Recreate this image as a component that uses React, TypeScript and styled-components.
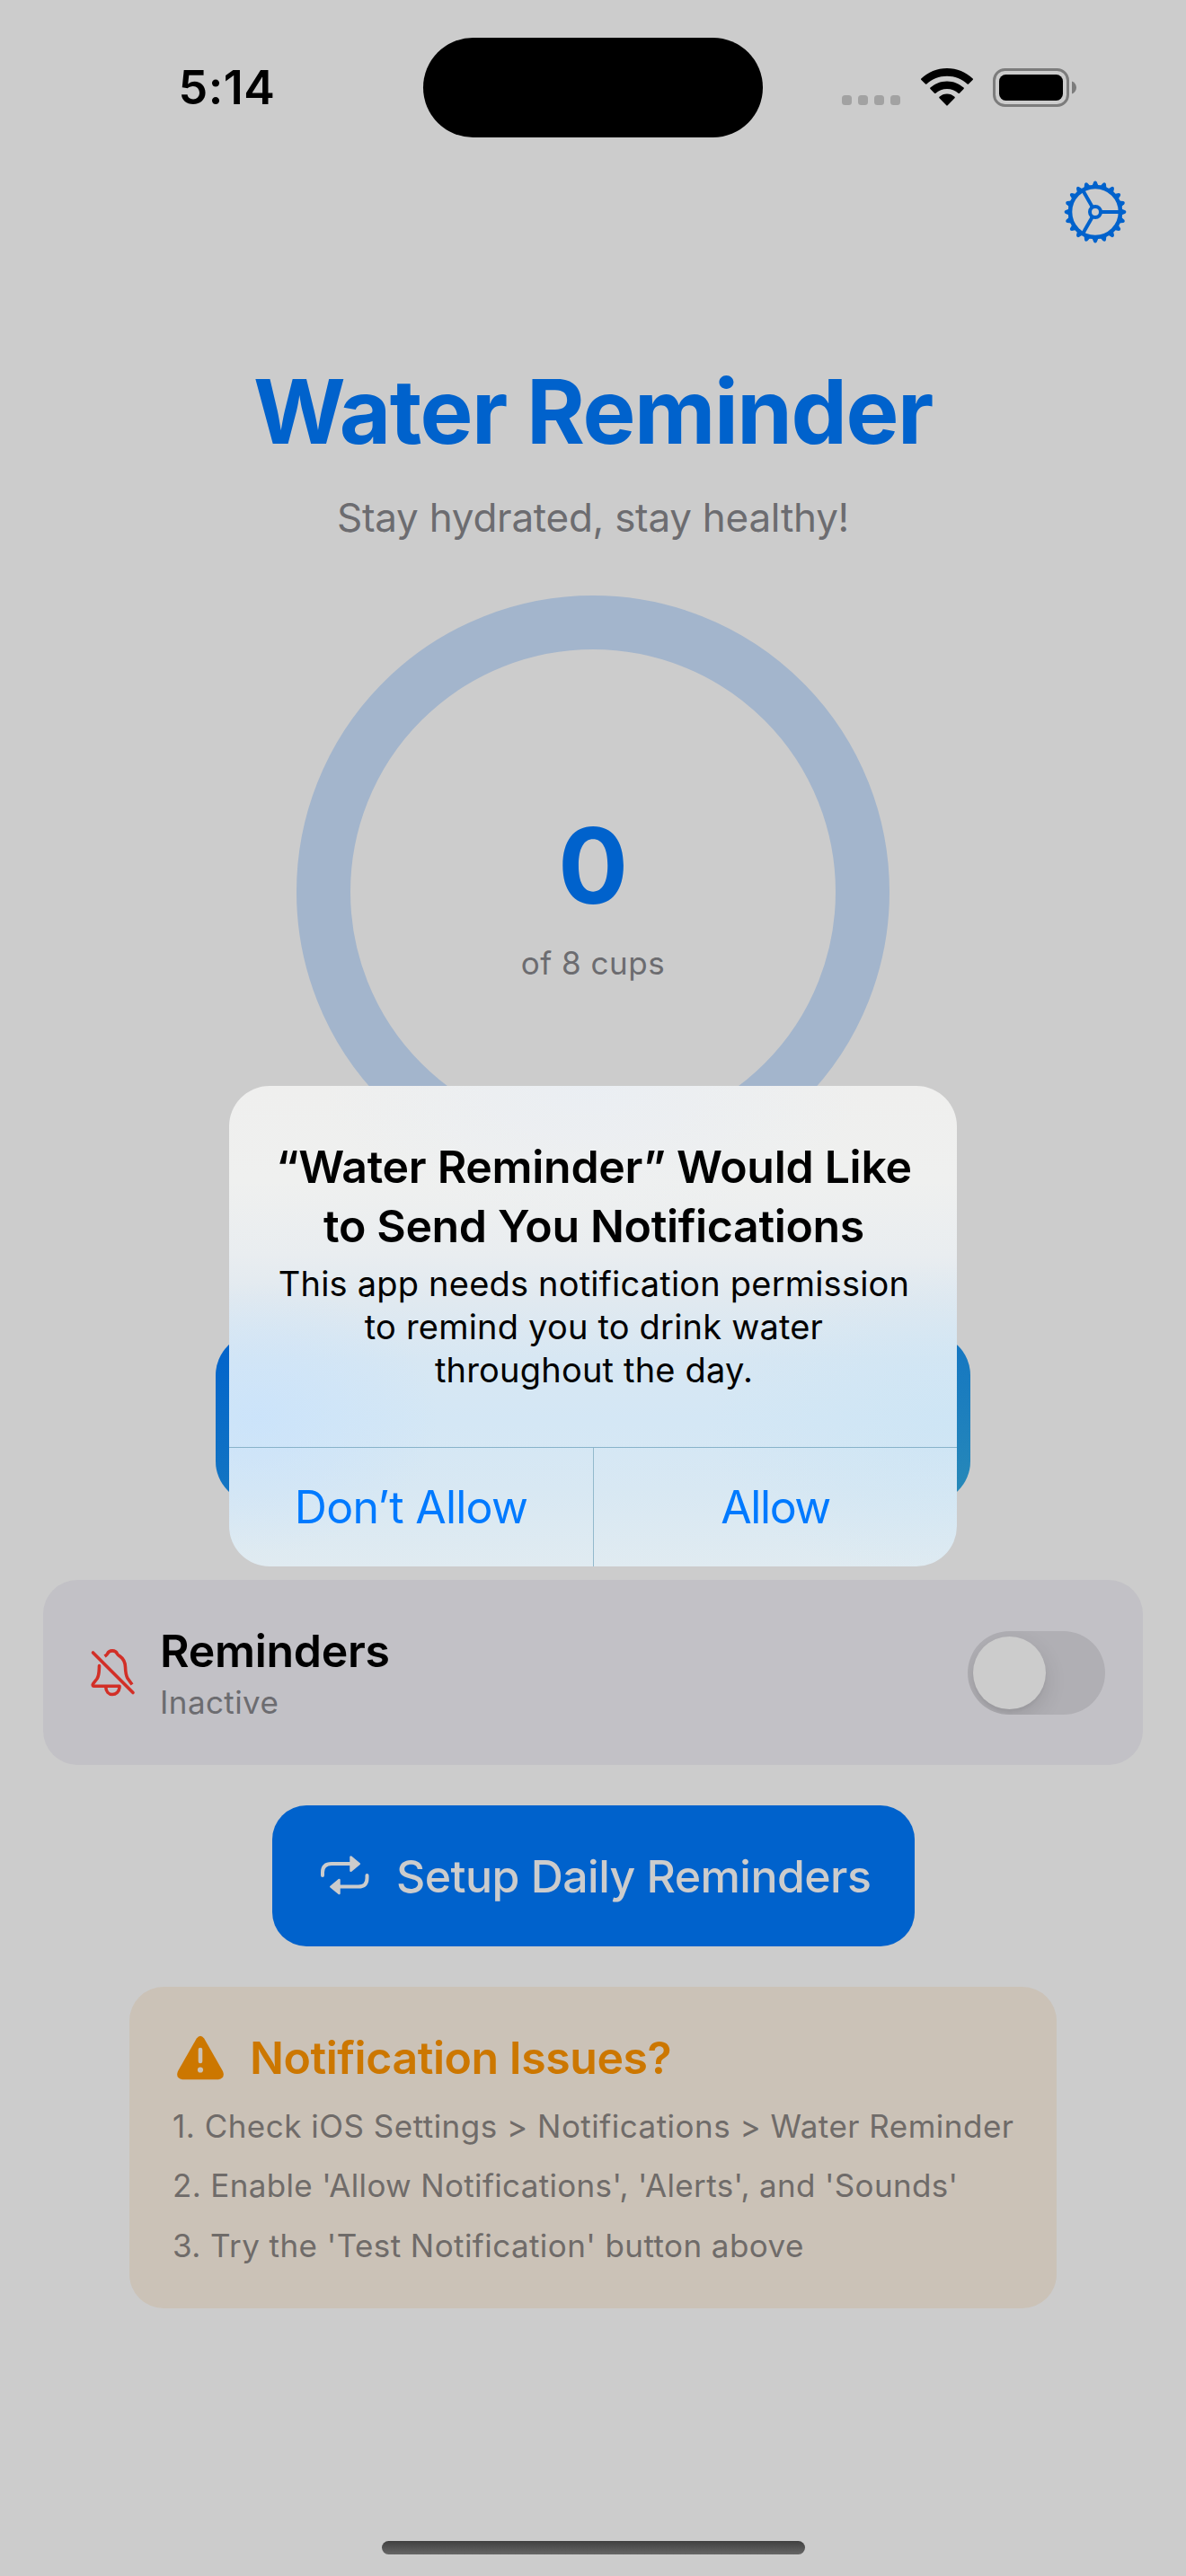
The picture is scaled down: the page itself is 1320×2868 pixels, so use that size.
import React from "react";
import styled, { createGlobalStyle } from "styled-components";

const GlobalStyle = createGlobalStyle`
  html, body { margin: 0; padding: 0; background: #cccccc; }
  *, *::before, *::after { box-sizing: border-box; }
  button { font: inherit; border: 0; background: none; padding: 0; margin: 0; }
  h1, h2, p { margin: 0; padding: 0; }
`;

const Screen = styled.div`
  position: relative;
  display: flex;
  flex-direction: column;
  width: 1320px;
  height: 2868px;
  overflow: hidden;
  background: #cccccc;
  color: #000;
  font-family: Inter, "Liberation Sans", sans-serif;
  white-space: nowrap;
`;

const Line = styled.p<{
  $size: number;
  $height: number;
  $weight?: number;
  $color?: string;
  $track?: number;
}>`
  font-size: ${(p) => p.$size}px;
  line-height: ${(p) => p.$height}px;
  font-weight: ${(p) => p.$weight ?? 400};
  color: ${(p) => p.$color ?? "#000"};
  letter-spacing: ${(p) => p.$track ?? 0}px;
`;

const StatusBar = styled.header`
  display: grid;
  grid-template-columns: 471px 378px 471px;
  height: 177px;
  padding-top: 41.5px;
`;

const StatusSide = styled.div<{ $left: number; $top?: number }>`
  display: flex;
  align-items: center;
  height: 111px;
  padding-left: ${(p) => p.$left}px;
  padding-top: ${(p) => p.$top ?? 0}px;
`;

const Island = styled.div`
  height: 111px;
  border-radius: 56px;
  background: #000;
`;

const Dots = styled.div`
  display: flex;
  gap: 7px;
  padding-top: 29px;
  margin-right: 23px;
`;

const Dot = styled.i`
  width: 11px;
  height: 11px;
  border-radius: 3.5px;
  background: #a2a2a2;
`;

const Wifi = styled.div`
  display: flex;
  margin-right: 22px;
`;

const Toolbar = styled.nav`
  display: flex;
  justify-content: flex-end;
  height: 220px;
  padding: 22.5px 65px 0 0;
`;

const Main = styled.main`
  display: flex;
  flex-direction: column;
  align-items: center;
  flex: 1;
`;

const Subtitle = styled.div`
  margin-top: 27px;
`;

const Ring = styled.section`
  display: flex;
  flex-direction: column;
  align-items: center;
  justify-content: center;
  gap: 12px;
  width: 660px;
  height: 660px;
  margin-top: 57px;
  padding-top: 2px;
  border: 60px solid #a3b5cc;
  border-radius: 50%;
`;

const LogButton = styled.div`
  width: 840px;
  height: 188px;
  margin-top: 162px;
  border-radius: 46px;
  background: linear-gradient(to bottom right, #0062cc, #288ab8);
`;

const Card = styled.section`
  display: flex;
  align-items: center;
  width: 1224px;
  height: 206px;
  margin-top: 86px;
  padding: 0 42px 0 51px;
  border-radius: 38px;
  background: #c2c1c6;
`;

const CardText = styled.div`
  flex: 1;
  padding-left: 27px;
`;

const Switch = styled.div`
  width: 153px;
  height: 93px;
  padding: 6px;
  border-radius: 47px;
  background: #b0afb4;
  overflow: hidden;
`;

const Thumb = styled.div`
  width: 81px;
  height: 81px;
  border-radius: 50%;
  background: #cccccc;
  box-shadow: 0 9px 24px rgba(0, 0, 0, 0.12), 0 3px 3px rgba(0, 0, 0, 0.04);
`;

const SetupButton = styled.button`
  display: flex;
  align-items: center;
  width: 715px;
  height: 157px;
  margin-top: 45px;
  padding-left: 52px;
  border-radius: 38px;
  background: #0062cc;
`;

const SetupLabel = styled.span`
  padding-left: 28.5px;
`;

const Issues = styled.section`
  width: 1032px;
  height: 358px;
  margin-top: 45px;
  padding: 46px 48px;
  border-radius: 38px;
  background: #cbc2b7;
`;

const IssuesHead = styled.div`
  display: flex;
  align-items: center;
  gap: 28px;
  height: 66px;
  padding-left: 4px;
`;

const Steps = styled.div`
  display: flex;
  flex-direction: column;
  gap: 18.67px;
  margin-top: 18.6px;
`;

const HomeIndicator = styled.div`
  width: 471px;
  height: 15px;
  margin: auto 0 24px;
  border-radius: 8px;
  background: linear-gradient(#404040, #666666);
`;

const Overlay = styled.div`
  position: absolute;
  inset: 0;
  display: flex;
  align-items: center;
  justify-content: center;
  padding-top: 85px;
`;

const Alert = styled.div`
  display: flex;
  flex-direction: column;
  width: 810px;
  height: 535px;
  border-radius: 45px;
  overflow: hidden;
  text-align: center;
  background:
    radial-gradient(ellipse 200px 150px at 4% 69%, rgba(200, 226, 252, 0.7), rgba(200, 226, 252, 0)),
    radial-gradient(ellipse 260px 180px at 98% 70%, rgba(202, 228, 245, 0.6), rgba(202, 228, 245, 0)),
    radial-gradient(ellipse 300px 150px at 50% 0%, rgba(233, 238, 244, 0.8), rgba(233, 238, 244, 0)),
    linear-gradient(#efefee 0%, #eff0ef 20%, #e9edf0 35%, #e0e9f0 45%, #d7e7f3 57%, #d4e7f5 70%, #d8e8f3 84%, #e0ebf1 100%);
`;

const AlertBody = styled.div`
  height: 402px;
  padding: 57px 0 0 2px;
`;

const AlertMessage = styled.div`
  margin-top: 7px;
`;

const AlertActions = styled.div`
  display: grid;
  grid-template-columns: 405px 1px 404px;
  height: 133px;
  border-top: 1px solid #88b3ca;
`;

const Divider = styled.i`
  background: #93b9cc;
`;

const GearIcon = () => (
  <svg width="72" height="72" viewBox="-36 -36 72 72" fill="none" stroke="#0062cc">
    <circle r="28" strokeWidth="4.6" />
    <circle r="6" strokeWidth="4" />
    {[0, 120, 240].map((a) => (
      <path key={a} d="M7 0H27" strokeWidth="4" transform={`rotate(${a})`} />
    ))}
    {Array.from({ length: 20 }, (_, i) => (
      <path
        key={i}
        d="M29 -3.6L33.4 -1.7Q35.4 0 33.4 1.7L29 3.6Z"
        fill="#0062cc"
        stroke="none"
        transform={`rotate(${i * 18})`}
      />
    ))}
  </svg>
);

const WifiIcon = () => (
  <svg width="58" height="43" viewBox="0 0 58 43">
    <path d="M29 0C40 0 50.2 4.3 57.7 11.5Q58.3 12.2 57.6 12.9L53 17.5Q52.3 18.2 51.6 17.5C45.5 12 37.7 8.8 29 8.8S12.5 12 6.4 17.5Q5.7 18.2 5 17.5L.4 12.9Q-.3 12.2 .3 11.5C7.8 4.3 18 0 29 0Z" />
    <path d="M29 14.4C36.2 14.4 42.8 17.2 47.6 21.6Q48.3 22.3 47.6 23L43 27.7Q42.3 28.3 41.5 27.7C38.2 24.7 33.8 23 29 23S19.8 24.7 16.5 27.7Q15.7 28.3 15 27.7L10.4 23Q9.7 22.3 10.4 21.6C15.2 17.2 21.8 14.4 29 14.4Z" />
    <path d="M29 28.5C32.2 28.5 35.2 29.7 37.5 31.8Q38.2 32.5 37.5 33.2L29.7 41.3Q29 42 28.3 41.3L20.5 33.2Q19.8 32.5 20.5 31.8C22.8 29.7 25.8 28.5 29 28.5Z" />
  </svg>
);

const BatteryIcon = () => (
  <svg width="94" height="43" viewBox="0 0 94 43">
    <rect x="1.5" y="1.5" width="82" height="40" rx="12" fill="none" stroke="#7c7c7c" strokeWidth="3" />
    <rect x="7" y="7" width="71" height="29" rx="7.5" />
    <path d="M88 14.5C91 15.6 93 18.3 93 21.5S91 27.4 88 28.5Z" fill="#7c7c7c" />
  </svg>
);

const BellSlashIcon = () => (
  <svg width="52" height="56" viewBox="0 0 52 56" fill="none" stroke="#d22f27" strokeWidth="3.6" strokeLinecap="round" strokeLinejoin="round">
    <path d="M4.5 6L49 50.5" />
    <path d="M17.5 10C19 8.9 20 8.6 20.5 7.4C21.5 5 23.5 3.9 26 3.9S30.500 5 31.5 7.4C32 8.6 33 8.9 34.5 10C38.5 12.8 40.3 17 40.5 22C40.7 28 41 31 43 34.5L48 41.5" strokeLinecap="butt" />
    <path d="M11.5 20.5C11.2 28 11.4 31.5 9 35L4.7 40.5C3.7 42 4.2 43.3 6 43.3H34" />
    <path d="M18.8 44.5C19 49.5 22 52.5 26 52.5S33.5 49.5 34 44.8" />
  </svg>
);

const RepeatIcon = () => (
  <svg width="58" height="50" viewBox="0 0 58 50" fill="none" stroke="#cccccc" strokeWidth="4" strokeLinecap="round">
    <path d="M4 24V20.5Q4 11 14 11H36" />
    <path d="M53.5 24V27Q53.5 36.6 44 36.6H22" />
    <path d="M35.5 3.5V18.8L44.8 11.1Z" fill="#cccccc" strokeWidth="2.5" strokeLinejoin="round" />
    <path d="M22.5 29V44L13.3 36.6Z" fill="#cccccc" strokeWidth="2.5" strokeLinejoin="round" />
  </svg>
);

const WarningIcon = () => (
  <svg width="54" height="50" viewBox="0 0 54 50">
    <path d="M22.8 3.4Q27 -2 31.2 3.4L52 40Q55 48 47 49.3H7Q-1 48 2 40Z" fill="#cc7700" />
    <path d="M27 16V29" stroke="#cbc2b7" strokeWidth="4.6" strokeLinecap="round" />
    <circle cx="27" cy="38.5" r="3.1" fill="#cbc2b7" />
  </svg>
);

const GREY = "#6c6c70";
const BLUE = "#0062cc";

const steps = [
  { text: "1. Check iOS Settings > Notifications > Water Reminder", track: 0.49 },
  { text: "2. Enable 'Allow Notifications', 'Alerts', and 'Sounds'", track: 0.34 },
  { text: "3. Try the 'Test Notification' button above", track: 0.43 },
];

const message = [
  "This app needs notification permission",
  "to remind you to drink water",
  "throughout the day.",
];

export default function App() {
  return (
    <Screen>
      <GlobalStyle />
      <StatusBar>
        <StatusSide $left={198.5} $top={2}>
          <Line $size={52} $height={64} $weight={600} $track={0.5}>5:14</Line>
        </StatusSide>
        <Island />
        <StatusSide $left={88}>
          <Dots>
            <Dot /><Dot /><Dot /><Dot />
          </Dots>
          <Wifi><WifiIcon /></Wifi>
          <BatteryIcon />
        </StatusSide>
      </StatusBar>
      <Toolbar>
        <GearIcon />
      </Toolbar>
      <Main>
        <Line as="h1" $size={99} $height={122} $weight={700} $color={BLUE} $track={-1.42}>Water Reminder</Line>
        <Subtitle>
          <Line $size={44} $height={60} $color={GREY} $track={-0.26}>Stay hydrated, stay healthy!</Line>
        </Subtitle>
        <Ring>
          <Line $size={116} $height={144} $weight={700} $color={BLUE}>0</Line>
          <Line $size={35} $height={48} $color={GREY} $track={0.5}>of 8 cups</Line>
        </Ring>
        <LogButton />
        <Card>
          <BellSlashIcon />
          <CardText>
            <Line as="h2" $size={50} $height={66} $weight={600} $track={-0.3}>Reminders</Line>
            <Line $size={35} $height={48} $color={GREY} $track={0.4}>Inactive</Line>
          </CardText>
          <Switch>
            <Thumb />
          </Switch>
        </Card>
        <SetupButton>
          <RepeatIcon />
          <SetupLabel>
            <Line as="span" $size={50} $height={66} $weight={500} $color="#cccccc" $track={-0.55}>Setup Daily Reminders</Line>
          </SetupLabel>
        </SetupButton>
        <Issues>
          <IssuesHead>
            <WarningIcon />
            <Line as="h2" $size={50} $height={66} $weight={600} $color="#cc7700" $track={-0.45}>Notification Issues?</Line>
          </IssuesHead>
          <Steps>
            {steps.map((s) => (
              <Line key={s.text} $size={35} $height={48} $color="#6f6b69" $track={s.track}>{s.text}</Line>
            ))}
          </Steps>
        </Issues>
        <HomeIndicator />
      </Main>
      <Overlay>
        <Alert role="alertdialog">
          <AlertBody>
            <Line $size={50} $height={66} $weight={600} $track={-0.3}>“Water Reminder” Would Like</Line>
            <Line $size={50} $height={66} $weight={600} $track={-0.35}>to Send You Notifications</Line>
            <AlertMessage>
              {message.map((m) => (
                <Line key={m} $size={38} $height={48} $track={0.2}>{m}</Line>
              ))}
            </AlertMessage>
          </AlertBody>
          <AlertActions>
            <button><Line as="span" $size={50} $height={66} $color="#007aff" $track={-0.75}>Don’t Allow</Line></button>
            <Divider />
            <button><Line as="span" $size={50} $height={66} $color="#007aff" $track={-1.4}>Allow</Line></button>
          </AlertActions>
        </Alert>
      </Overlay>
    </Screen>
  );
}
